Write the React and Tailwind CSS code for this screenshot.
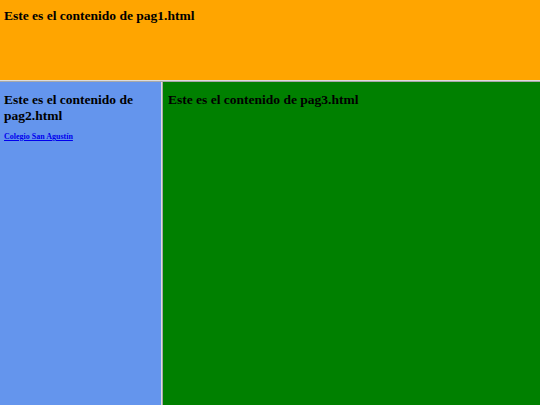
export default function App() {
  const serif = { fontFamily: '"Liberation Serif", serif' };
  return (
    <div className="w-[540px] h-[405px] flex flex-col bg-[#e8e8e8] overflow-hidden" style={serif}>
      <div className="h-[80px] bg-[#ffa500] px-[4px] pt-[8px]">
        <h3 className="text-[13.5px] font-bold text-black leading-[15.5px]">Este es el contenido de pag1.html</h3>
      </div>
      <div className="h-[2px] bg-[#dcdcdc] border-b border-[#a8a8a8]"></div>
      <div className="flex flex-1">
        <div className="w-[161px] bg-[#6495ed] px-[4px] pt-[10px]">
          <h3 className="text-[13.5px] font-bold text-black leading-[15.5px]">Este es el contenido de pag2.html</h3>
          <a href="#" className="block mt-[8px] text-[8px] font-bold text-[#0000ee] underline">Colegio San Agustín</a>
        </div>
        <div className="w-[2px] bg-[#dcdcdc] border-r border-[#a8a8a8]"></div>
        <div className="flex-1 bg-[#008000] px-[5px] pt-[10px]">
          <h3 className="text-[13.5px] font-bold text-black leading-[15.5px]">Este es el contenido de pag3.html</h3>
        </div>
      </div>
    </div>
  );
}
